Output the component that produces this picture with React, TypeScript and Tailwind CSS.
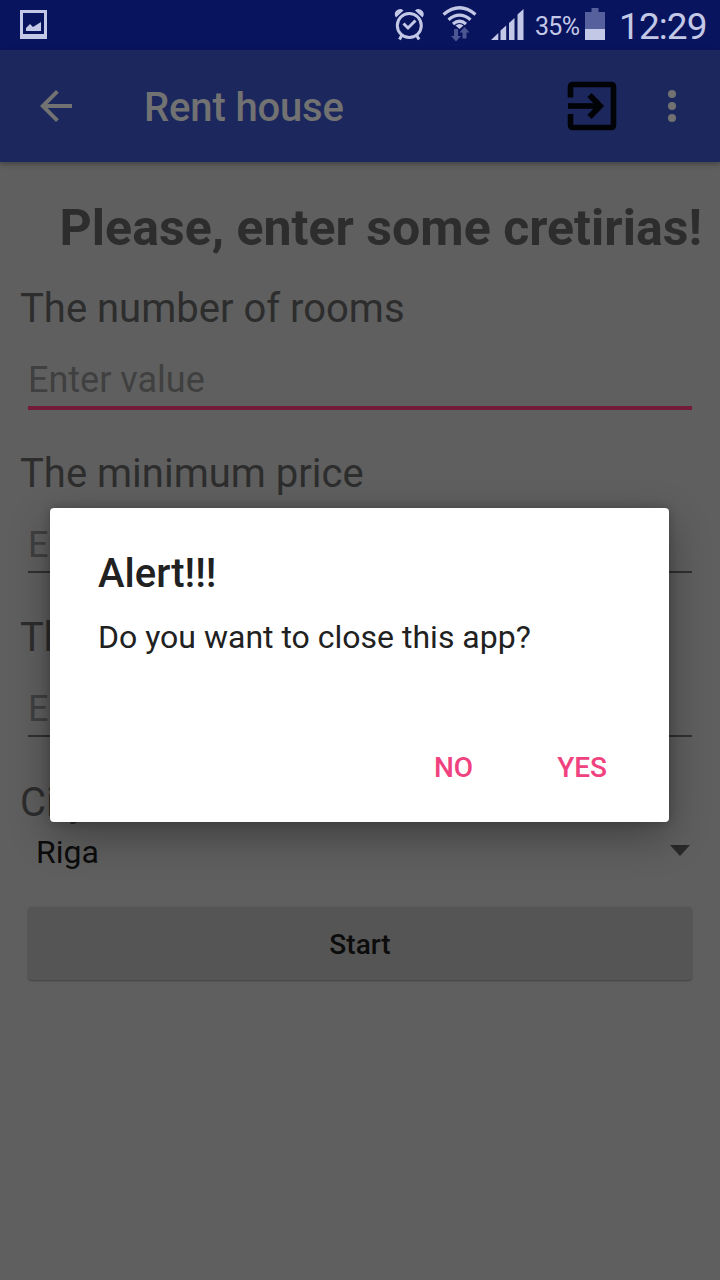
import React from 'react';

function StatusBar() {
  return (
    <div className="flex h-[50px] shrink-0 items-center bg-[#09145e] pl-5 text-[#c3c8e6]">
      <svg width="27" height="29" viewBox="0 0 27 29" className="mt-[-1px]" fill="currentColor">
        <path fillRule="evenodd" d="M0 0H27V29H0ZM3 3V24H24V3Z" />
        <path d="M6 21V18L10 14L13 17L21 12V21Z" />
      </svg>
      <svg width="134" height="50" viewBox="390 0 134 50" className="ml-[343px]" fill="currentColor">
        <g fill="none" stroke="currentColor" strokeWidth="3">
          <circle cx="409.300" cy="25.500" r="12" />
          <path d="M403.500 23.500L408 28L415.500 20.500" />
          <path d="M402 35L399.500 39.500M416.500 35L419 39.500" />
        </g>
        <path d="M396 17.500Q393.500 14 396 11Q400 7.500 403.500 10.500ZM422.500 17.500Q425 14 422.500 11Q418.500 7.500 415 10.500Z" />
        <g fill="none" stroke="currentColor" strokeWidth="3.200">
          <path d="M443.500 14.500Q459.500 1 475.500 14.500" />
          <path d="M448.500 19.700Q459.500 10.500 470.500 19.700" />
          <path d="M453 24Q459.500 18.500 466 24" />
        </g>
        <path d="M455.500 25.500Q459.500 22.500 463.500 25.500L459.500 29Z" />
        <g fill="#4c5693">
          <path d="M454 29H458V36H461L456 41.500L451 36H454Z" />
          <path d="M462.500 38.500H466.500V32.500H469.500L464.500 27L459.500 32.500H462.500Z" />
        </g>
        <path d="M491 40L498.300 33V40ZM500.500 40V30.500L506.200 25.500V40ZM509 40V23L514.500 18V40ZM517.500 40V14.500L523.500 9V40Z" />
      </svg>
      <span className="ml-[11px] mt-[3px] w-[49px] whitespace-nowrap text-[25px] leading-[50px] tracking-[-0.7px]">35%</span>
      <svg width="20" height="32" viewBox="0 0 20 32" className="ml-[1px] mt-[-3px]">
        <path fill="#56609c" d="M6.500 0H13.500V4H20V22H0V4H6.500Z" />
        <path fill="currentColor" d="M0 21H20V32H0Z" />
      </svg>
      <span className="ml-[14px] mt-[3px] whitespace-nowrap text-[37px] leading-[50px] tracking-[-0.9px]">12:29</span>
    </div>
  );
}

function Toolbar() {
  return (
    <header className="flex h-28 shrink-0 items-center bg-[#1c285d] pl-8 text-[#727272] shadow-[0_2px_5px_rgba(0,0,0,0.3)]">
      <svg width="48" height="48" viewBox="0 0 24 24" fill="currentColor">
        <path d="M20 11H7.830l5.590-5.590L12 4l-8 8 8 8 1.410-1.410L7.830 13H20v-2z" />
      </svg>
      <h1 className="ml-16 mt-1 text-[40px] font-medium leading-[48px] tracking-[-0.15px]">Rent house</h1>
      <svg width="52" height="52" viewBox="566 80 52 52" className="ml-auto" fill="none" stroke="#020307" strokeWidth="5.600">
        <path d="M570.500 97.500V87Q570.500 84.500 573 84.500H611Q613.500 84.500 613.500 87V125Q613.500 127.500 611 127.500H573Q570.500 127.500 570.500 125V114" />
        <path d="M568 106H600" />
        <path strokeWidth="6" d="M589.500 95L600 106L589.500 117" />
      </svg>
      <svg width="48" height="48" viewBox="0 0 24 24" className="ml-[30px] mr-6" fill="currentColor">
        <circle cx="12" cy="6" r="2" />
        <circle cx="12" cy="12" r="2" />
        <circle cx="12" cy="18" r="2" />
      </svg>
    </header>
  );
}

function Field({ label, focused = false }: { label: string; focused?: boolean }) {
  return (
    <div className="h-[164.7px]">
      <div className="pl-5 pt-px text-[40px] leading-[48px] text-[#2d2d2d]">{label}</div>
      <div className="mx-7 mt-[25px] h-[44px] text-[36px] leading-[44px] text-[#404040]">Enter value</div>
      <div className={focused ? 'mx-7 mt-1 h-1 bg-[#731b38]' : 'mx-7 mt-1 h-0.5 bg-[#303030]'} />
    </div>
  );
}

function AlertDialog() {
  return (
    <div
      role="dialog"
      className="absolute left-[50px] top-[508px] flex h-[314px] w-[619px] flex-col rounded-[4px] bg-white px-12 text-[#212121] shadow-[0_14px_40px_rgba(0,0,0,0.33),0_0_10px_rgba(0,0,0,0.22)]"
    >
      <h2 className="mt-[42px] text-[40px] font-medium leading-[48px]">Alert!!!</h2>
      <p className="mt-[19px] text-[32px] leading-[40px]">Do you want to close this app?</p>
      <div className="mt-[95px] flex justify-end gap-[84px] pr-[14px] text-[28px] font-medium leading-8 text-[#f0427f]">
        <button>NO</button>
        <button>YES</button>
      </div>
    </div>
  );
}

export default function App() {
  return (
    <div className="relative flex h-[1280px] w-[720px] flex-col overflow-hidden bg-[#5f5f5f] font-['Roboto',sans-serif]">
      <StatusBar />
      <Toolbar />
      <main className="flex flex-col">
        <h2 className="mt-9 whitespace-nowrap pr-[18px] text-right text-[50px] font-bold leading-[60px] tracking-[0.03px] text-[#2d2d2d]">
          Please, enter some cretirias!
        </h2>
        <div className="mt-[26px]">
          <Field label="The number of rooms" focused />
          <Field label="The minimum price" />
          <Field label="The maximum price" />
        </div>
        <div className="pl-5 pt-px text-[40px] leading-[48px] text-[#2d2d2d]">City</div>
        <div className="mt-[5px] flex h-10 items-center justify-between pl-9 pr-[30px] text-[32px] leading-10 text-[#0c0c0c]">
          <span>Riga</span>
          <svg width="20" height="11" viewBox="0 0 20 11" className="mt-[-3px]">
            <path fill="#292929" d="M0 0H20L10 11Z" />
          </svg>
        </div>
        <button className="mx-7 mt-[35px] h-[73px] rounded-[4px] bg-[#555555] pt-0.5 text-[28px] font-medium text-[#0c0c0c] shadow-[0_1px_2px_rgba(0,0,0,0.3)]">
          Start
        </button>
      </main>
      <AlertDialog />
    </div>
  );
}
